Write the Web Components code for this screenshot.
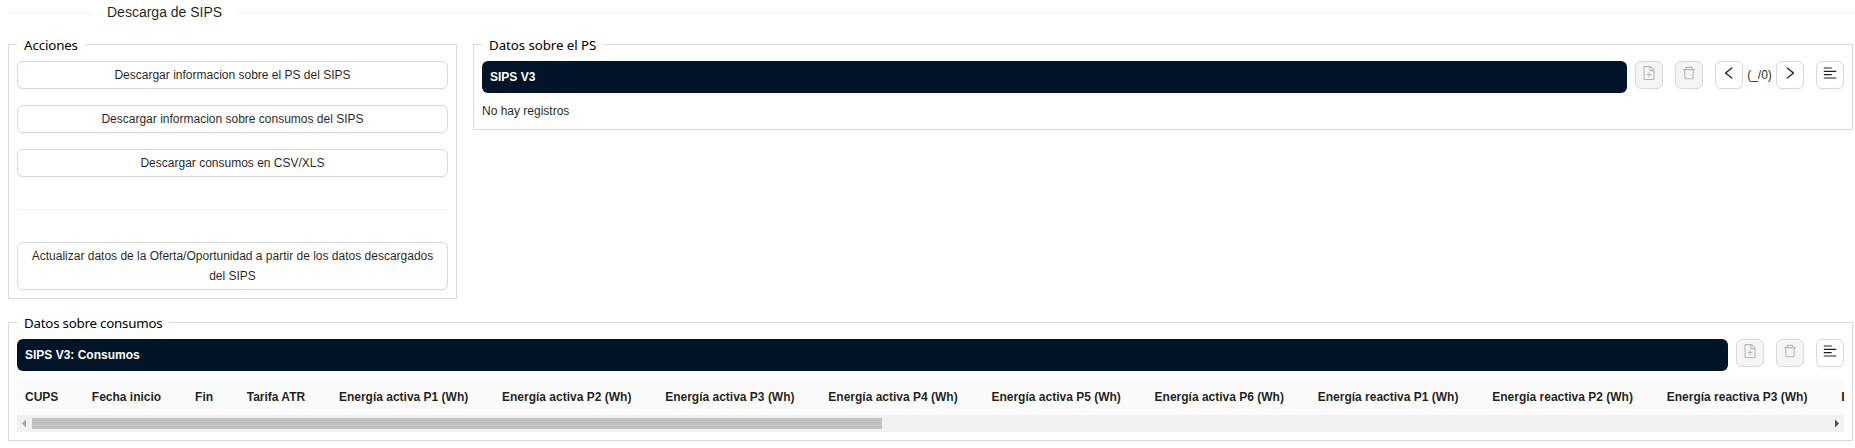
<!DOCTYPE html>
<html lang="es">
<head>
<meta charset="utf-8">
<title>Descarga de SIPS</title>
<style>
html,body{margin:0;background:#fff;overflow:hidden}
body{font:12px/20px "Liberation Sans",Arial,sans-serif;color:rgba(0,0,0,.88)}
</style>
</head>
<body>
<sips-page></sips-page>
<script>
const ICONS = {
  add: 'M854.6 288.6L639.4 73.4c-6-6-14.1-9.4-22.6-9.4H192c-17.7 0-32 14.3-32 32v832c0 17.7 14.3 32 32 32h640c17.7 0 32-14.3 32-32V311.3c0-8.5-3.4-16.7-9.4-22.7zM790.2 326H602V137.8L790.2 326zm1.8 562H232V136h302v216a42 42 0 0042 42h216v494zM544 472c0-4.4-3.6-8-8-8h-48c-4.4 0-8 3.6-8 8v108H372c-4.4 0-8 3.6-8 8v48c0 4.4 3.6 8 8 8h108v108c0 4.4 3.6 8 8 8h48c4.4 0 8-3.6 8-8V644h108c4.4 0 8-3.6 8-8v-48c0-4.4-3.6-8-8-8H544V472z',
  trash: 'M360 184h-8c4.4 0 8-3.6 8-8v8h304v-8c0 4.4 3.6 8 8 8h-8v72h72v-80c0-35.3-28.7-64-64-64H352c-35.3 0-64 28.7-64 64v80h72v-72zm504 72H160c-17.7 0-32 14.3-32 32v32c0 4.4 3.6 8 8 8h60.4l24.7 523c1.6 34.1 29.8 61 63.9 61h454c34.2 0 62.3-26.8 63.9-61l24.7-523H888c4.4 0 8-3.6 8-8v-32c0-17.7-14.3-32-32-32zM731.3 840H292.7l-24.2-512h487l-24.2 512z',
  left: 'M724 218.3V141c0-6.7-7.7-10.4-12.9-6.3L260.3 486.8a31.86 31.86 0 000 50.3l450.8 352.1c5.3 4.1 12.9.4 12.9-6.3v-77.3c0-4.9-2.3-9.6-6.1-12.6l-360-281 360-281.1c3.8-3 6.1-7.7 6.1-12.6z',
  right: 'M765.7 486.8L314.9 134.7A7.97 7.97 0 00302 141v77.3c0 4.9 2.3 9.6 6.1 12.6l360 281.1-360 281.1c-3.9 3-6.1 7.7-6.1 12.6V883c0 6.7 7.7 10.4 12.9 6.3l450.8-352.1a31.96 31.96 0 000-50.4z',
  menu: 'M120 230h496c4.4 0 8-3.6 8-8v-56c0-4.4-3.6-8-8-8H120c-4.4 0-8 3.6-8 8v56c0 4.4 3.6 8 8 8zm0 424h496c4.4 0 8-3.6 8-8v-56c0-4.4-3.6-8-8-8H120c-4.4 0-8 3.6-8 8v56c0 4.4 3.6 8 8 8zm784 140H120c-4.4 0-8 3.6-8 8v56c0 4.4 3.6 8 8 8h784c4.4 0 8-3.6 8-8v-56c0-4.4-3.6-8-8-8zm0-424H120c-4.4 0-8 3.6-8 8v56c0 4.4 3.6 8 8 8h784c4.4 0 8-3.6 8-8v-56c0-4.4-3.6-8-8-8z'
};
const define = (name, html) => customElements.define(name, class extends HTMLElement {
  constructor() {
    super();
    this.attachShadow({mode: 'open'}).innerHTML = typeof html === 'function' ? html(this) : html;
  }
});

define('title-divider', `<style>
:host{display:flex;align-items:center;height:24px;font-size:14px;line-height:22px;white-space:nowrap}
i{height:2px;margin-top:2px;background:rgba(5,5,5,.03)}
.a{width:85px}.b{flex:1}
span{padding:0 14px}
</style><i class="a"></i><span><slot></slot></span><i class="b"></i>`);

define('group-box', el => `<style>
:host{display:block}
fieldset{margin:0;min-width:0;border:1px solid #d9d9d9;padding:6px 8px 8px}
legend{box-sizing:border-box;width:${el.getAttribute('legend-width')}px;height:21px;margin:0;padding:0 0 0 7px;font:13.3px/22px "Noto Sans","Open Sans",sans-serif;letter-spacing:${el.getAttribute('tracking') || 0}px;color:#000;white-space:nowrap}
</style><fieldset><legend>${el.getAttribute('legend')}</legend><slot></slot></fieldset>`);

define('action-button', `<style>
:host{display:block}
button{display:block;box-sizing:border-box;width:100%;margin:0;padding:3px 7px;border:1px solid #d9d9d9;border-radius:6px;background:#fff;box-shadow:0 2px 0 rgba(0,0,0,.02);font:inherit;color:inherit}
</style><button><slot></slot></button>`);

define('icon-button', el => `<style>
:host{display:block;flex:none}
button{display:flex;box-sizing:border-box;width:28px;height:28px;margin:0;padding:3px 5px;border:1px solid #d9d9d9;border-radius:6px;background:#fff;box-shadow:0 2px 0 rgba(0,0,0,.02);color:rgba(0,0,0,.88)}
button:disabled{background:#f5f5f5;color:rgba(0,0,0,.25);box-shadow:none}
svg{display:block;width:16px;height:16px;flex:none}
</style><button ${el.hasAttribute('disabled') ? 'disabled' : ''} aria-label="${el.getAttribute('label')}"><svg viewBox="0 0 1024 1024" fill="currentColor"><path d="${ICONS[el.getAttribute('icon')]}"/></svg></button>`);

define('title-bar', `<style>
:host{display:flex;align-items:flex-start}
.bar{flex:1;height:32px;box-sizing:border-box;padding:0 8px;border-radius:6px;background:#021428;color:#fff;font-weight:700;line-height:32px}
.tools{display:flex;gap:12px;margin-left:8px}
</style><div class="bar"><slot></slot></div><div class="tools"><slot name="tools"></slot></div>`);

define('record-pager', `<style>
:host{display:flex;align-items:center;height:28px}
span{width:33px;text-align:center}
</style><icon-button icon="left" label="Anterior"></icon-button><span>(_/0)</span><icon-button icon="right" label="Siguiente"></icon-button>`);

const COLUMNS = [['CUPS', 66.8], ['Fecha inicio', 103.3], ['Fin', 51.6], ['Tarifa ATR', 92.2],
  ...[1, 2, 3, 4, 5, 6].map(n => [`Energía activa P${n} (Wh)`, 163.15]),
  ...[1, 2, 3, 4].map(n => [`Energía reactiva P${n} (Wh)`, 174.5])];
define('data-table', `<style>
:host{display:block;margin-top:8px}
.head{display:flex;height:36px;overflow:hidden;background:#fafafa;font-weight:700;line-height:36px;white-space:nowrap}
.head div{flex:none;box-sizing:border-box;padding-left:8px}
.scroll{display:flex;align-items:center;height:17px;background:#f1f1f1}
.thumb{width:850px;height:11px;background:#c1c1c1}
.space{flex:1}
svg{display:block;flex:none;width:15px;height:17px}
</style><div class="head">${COLUMNS.map(([t, w]) => `<div style="width:${w}px">${t}</div>`).join('')}</div>
<div class="scroll"><svg viewBox="0 0 15 17"><path d="M5 8.5l4-4v8z" fill="#a3a3a3"/></svg><div class="thumb"></div><div class="space"></div><svg viewBox="0 0 15 17"><path d="M10 8.5l-4-4v8z" fill="#505050"/></svg></div>`);

define('sips-page', `<style>
:host{display:block;padding-left:8px}
.top{display:grid;grid-template-columns:449px 1380px;gap:16px;align-items:start;margin-top:10px}
.actions{display:grid;gap:16px}
hr{width:100%;height:1px;margin:16px 0;border:0;background:rgba(5,5,5,.06)}
p{margin:0;padding:8px 0 0;height:20px}
.low{width:1845px;margin-top:13px}
</style>
<title-divider>Descarga de SIPS</title-divider>
<div class="top">
<group-box legend="Acciones" legend-width="68" tracking="-0.12"><div class="actions">
<action-button>Descargar informacion sobre el PS del SIPS</action-button>
<action-button>Descargar informacion sobre consumos del SIPS</action-button>
<action-button>Descargar consumos en CSV/XLS</action-button>
<hr>
<action-button>Actualizar datos de la Oferta/Oportunidad a partir de los datos descargados del SIPS</action-button>
</div></group-box>
<group-box legend="Datos sobre el PS" legend-width="121" tracking="-0.07">
<title-bar>SIPS V3<icon-button slot="tools" icon="add" label="Nuevo" disabled></icon-button><icon-button slot="tools" icon="trash" label="Borrar" disabled></icon-button><record-pager slot="tools"></record-pager><icon-button slot="tools" icon="menu" label="Menú"></icon-button></title-bar>
<p>No hay registros</p>
</group-box>
</div>
<group-box class="low" legend="Datos sobre consumos" legend-width="152" tracking="-0.21">
<title-bar>SIPS V3: Consumos<icon-button slot="tools" icon="add" label="Nuevo" disabled></icon-button><icon-button slot="tools" icon="trash" label="Borrar" disabled></icon-button><icon-button slot="tools" icon="menu" label="Menú"></icon-button></title-bar>
<data-table></data-table>
</group-box>`);
</script>
</body>
</html>
